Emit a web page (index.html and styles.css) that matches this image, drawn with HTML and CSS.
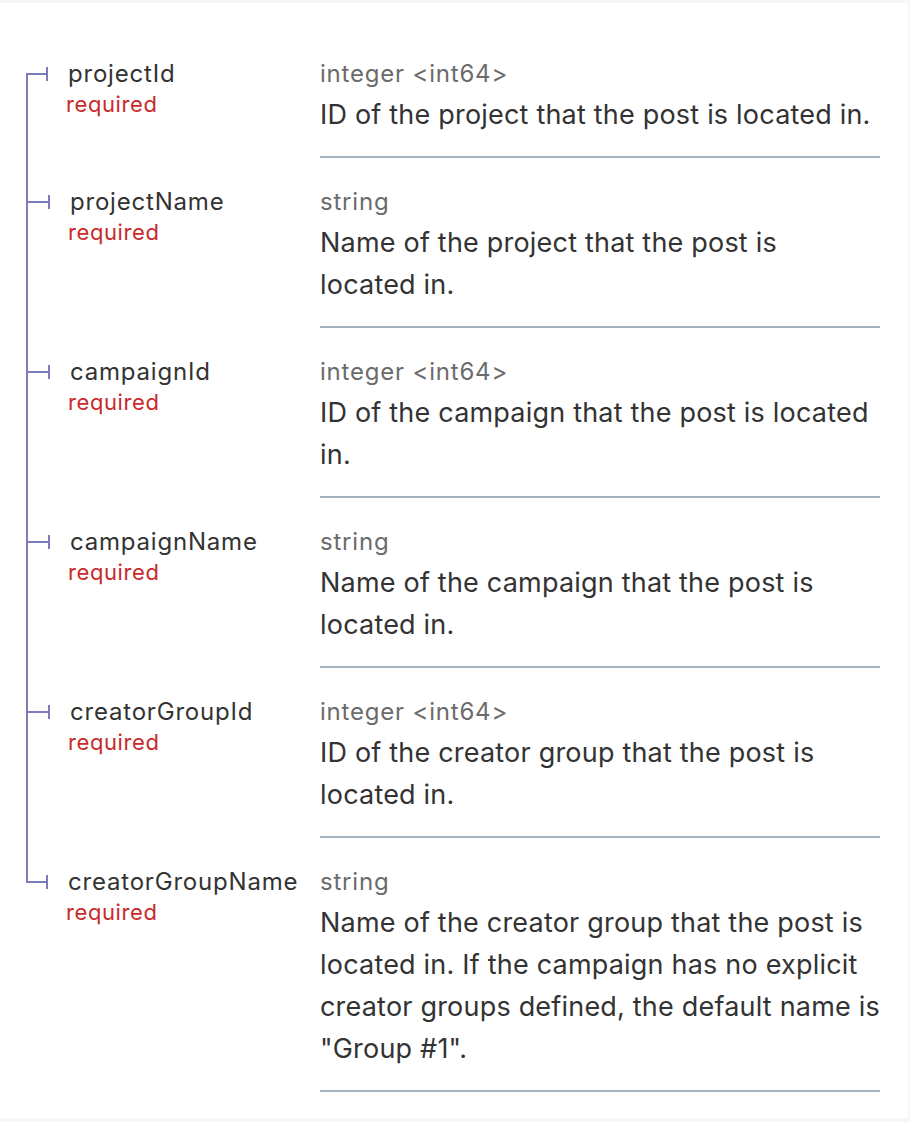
FILE: index.html
```html
<!DOCTYPE html>
<html lang="en">
<head>
<meta charset="utf-8">
<title>Schema properties</title>
<link rel="stylesheet" href="styles.css">
</head>
<body>
<div class="panel">
  <div class="props">
    <div class="prop first">
      <div class="pname">
        <div class="nline"><span class="bullet"><span class="bh"></span><span class="bv"></span></span><span class="nm">projectId</span></div>
        <div class="req">required</div>
      </div>
      <div class="pdet">
        <div class="type">integer &lt;int64&gt;</div>
        <div class="desc">ID of the project that the post is located in.</div>
      </div>
    </div>
    <div class="prop mid">
      <div class="pname">
        <div class="nline"><span class="bullet"><span class="bh"></span><span class="bv"></span></span><span class="nm">projectName</span></div>
        <div class="req">required</div>
      </div>
      <div class="pdet">
        <div class="type">string</div>
        <div class="desc">Name of the project that the post is<br>located in.</div>
      </div>
    </div>
    <div class="prop mid">
      <div class="pname">
        <div class="nline"><span class="bullet"><span class="bh"></span><span class="bv"></span></span><span class="nm">campaignId</span></div>
        <div class="req">required</div>
      </div>
      <div class="pdet">
        <div class="type">integer &lt;int64&gt;</div>
        <div class="desc">ID of the campaign that the post is located in.</div>
      </div>
    </div>
    <div class="prop mid">
      <div class="pname">
        <div class="nline"><span class="bullet"><span class="bh"></span><span class="bv"></span></span><span class="nm">campaignName</span></div>
        <div class="req">required</div>
      </div>
      <div class="pdet">
        <div class="type">string</div>
        <div class="desc">Name of the campaign that the post is located in.</div>
      </div>
    </div>
    <div class="prop mid">
      <div class="pname">
        <div class="nline"><span class="bullet"><span class="bh"></span><span class="bv"></span></span><span class="nm">creatorGroupId</span></div>
        <div class="req">required</div>
      </div>
      <div class="pdet">
        <div class="type">integer &lt;int64&gt;</div>
        <div class="desc">ID of the creator group that the post is located in.</div>
      </div>
    </div>
    <div class="prop last">
      <div class="pname">
        <div class="nline"><span class="bullet"><span class="bh"></span><span class="bv"></span></span><span class="nm">creatorGroupName</span></div>
        <div class="req">required</div>
      </div>
      <div class="pdet">
        <div class="type">string</div>
        <div class="desc">Name of the creator group that the post is located in. If the campaign has no explicit creator groups defined, the default name is "Group #1".</div>
      </div>
    </div>
  </div>
</div>
</body>
</html>
```

FILE: styles.css
```css
html, body {
  margin: 0;
  padding: 0;
}
body {
  background: #f6f6f7;
  font-family: Inter, "Noto Sans", "Liberation Sans", sans-serif;
  color: #333333;
}
.panel {
  background: #ffffff;
  margin: 3px 2px 4px 0;
  height: 1115px;
  box-sizing: border-box;
  padding: 27px 0 0 26px;
}
.prop {
  display: grid;
  grid-template-columns: 294px 560px;
}
.pname {
  padding-top: 24px;
  background-image: linear-gradient(#7c7cbb, #7c7cbb);
  background-repeat: no-repeat;
  background-size: 2px 100%;
  background-position: 0 43px;
}
.prop.mid .pname {
  border-left: 2px solid #7c7cbb;
  background: none;
}
.prop.last .pname {
  background-size: 2px 45px;
  background-position: 0 0;
}
.nline {
  display: flex;
  align-items: center;
  height: 40px;
}
.bullet {
  display: flex;
  align-items: center;
  flex: none;
}
.bh {
  display: block;
  width: 20px;
  height: 2px;
  background: #7c7cbb;
}
.bv {
  display: block;
  width: 2px;
  height: 14px;
  background: #7c7cbb;
}
.nm {
  margin-left: 20px;
  font-size: 24px;
  letter-spacing: 0.8px;
  line-height: 40px;
  color: #333333;
  white-space: nowrap;
}
.req {
  padding-left: 40px;
  font-size: 22px;
  letter-spacing: 0.6px;
  line-height: 20px;
  color: #c92a2a;
}
.pdet {
  padding: 24px 0 20px;
  border-bottom: 2px solid #a3b3bd;
  min-width: 0;
}
.type {
  font-size: 24px;
  letter-spacing: 0.8px;
  line-height: 40px;
  color: #6b6b6b;
}
.desc {
  font-size: 27px;
  letter-spacing: 0.2px;
  line-height: 42px;
  color: #333333;
  margin-right: -6px;
}
```
